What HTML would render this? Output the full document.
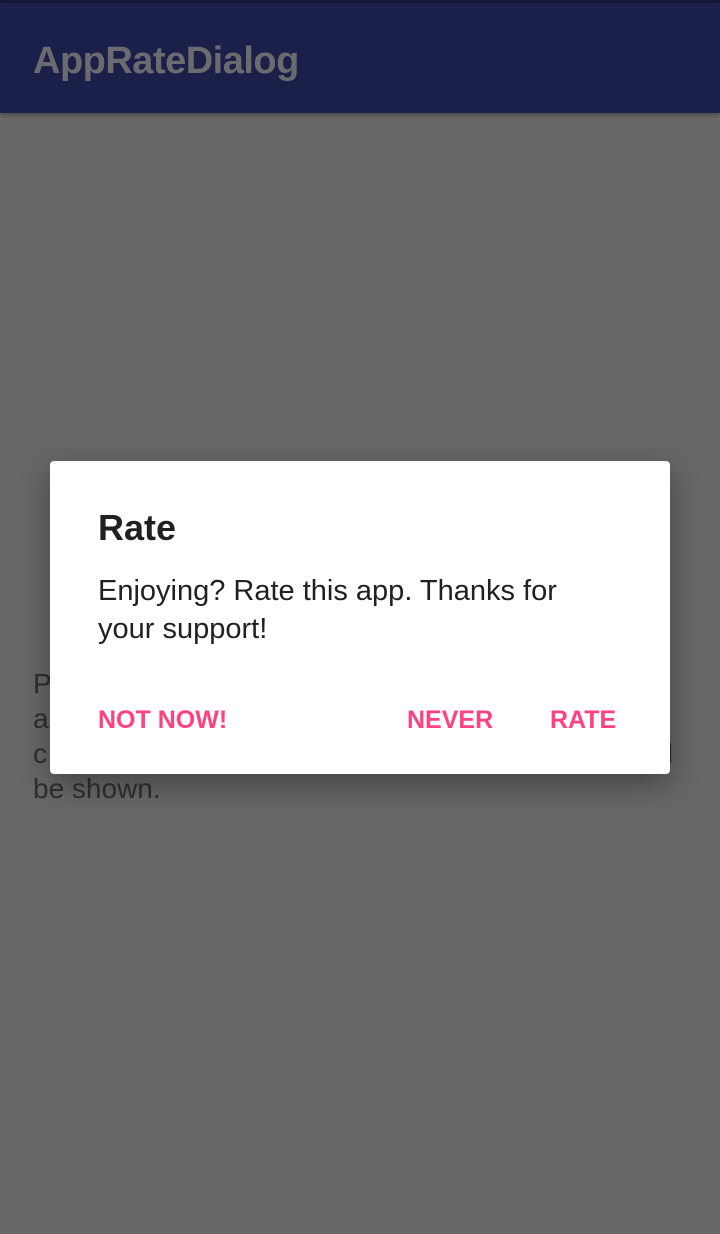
<!DOCTYPE html>
<html><head><style>
body{margin:0;width:720px;height:1234px;background:#676767;font-family:"Liberation Sans",sans-serif;position:relative;overflow:hidden}
.sb{position:absolute;top:0;left:0;width:720px;height:3px;background:#14183a}
.bar{position:absolute;top:3px;left:0;width:720px;height:110px;background:#1b204b;box-shadow:0 2px 4px rgba(0,0,0,.3)}
.bar span{position:absolute;left:33px;top:37px;font-size:38px;color:#6b6b6f;font-weight:bold;letter-spacing:-0.5px}
.bg{position:absolute;left:33px;top:666px;width:640px;font-size:28px;line-height:35px;color:#2e2e2e}
.dlg{position:absolute;left:50px;top:461px;width:620px;height:313px;background:#fff;border-radius:4px;box-shadow:0 10px 30px rgba(0,0,0,.35)}
.t{position:absolute;left:48px;top:46px;font-size:36px;font-weight:bold;color:#212121}
.m{position:absolute;left:48px;top:111px;width:510px;font-size:29px;line-height:38px;color:#212121}
.b{position:absolute;top:245px;font-size:25px;font-weight:bold;color:#ff4081}
</style></head><body>
<div class="sb"></div>
<div class="bar"><span>AppRateDialog</span></div>
<div class="bg">P<br>a<br>c<span style="float:right">l</span><br>be shown.</div>
<div class="dlg">
<div class="t">Rate</div>
<div class="m">Enjoying? Rate this app. Thanks for your support!</div>
<div class="b" style="left:48px">NOT NOW!</div>
<div class="b" style="left:357px">NEVER</div>
<div class="b" style="left:500px">RATE</div>
</div>
</body></html>
